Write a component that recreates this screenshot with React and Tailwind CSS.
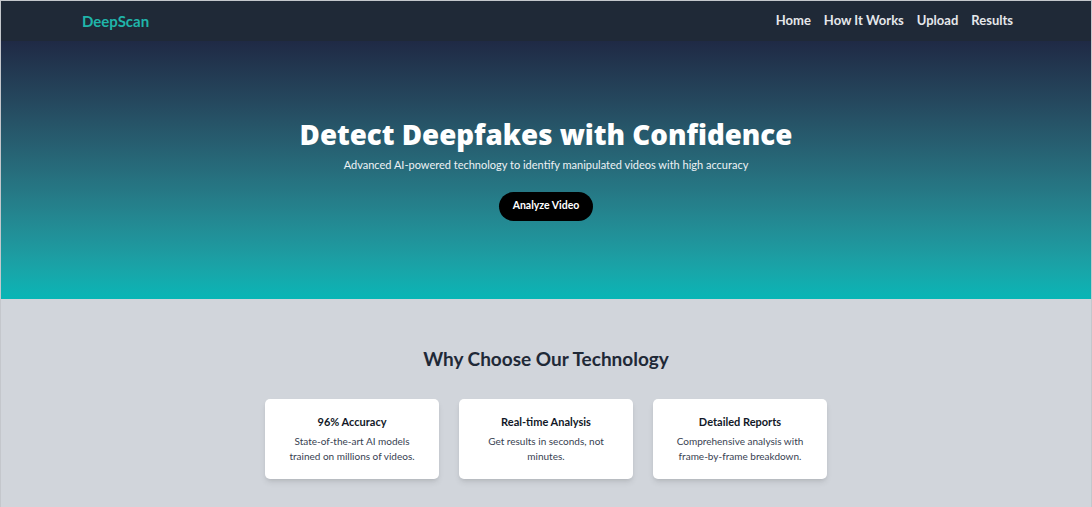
export default function App() {
  const features = [
    { title: "96% Accuracy", text: "State-of-the-art AI models trained on millions of videos." },
    { title: "Real-time Analysis", text: "Get results in seconds, not minutes." },
    { title: "Detailed Reports", text: "Comprehensive analysis with frame-by-frame breakdown." },
  ];

  return (
    <div className="min-h-screen bg-[#d1d5db] border border-[#c4c7cc] font-['Lato',sans-serif]">
      {/* Navbar */}
      <nav className="bg-[#1f2937] h-[40px] flex items-center justify-between pl-[81px] pr-[78px]">
        <span className="text-[#1fb5aa] font-bold text-[15px]">DeepScan</span>
        <div className="flex items-center gap-[13px] text-[13px] font-bold text-[#e5e7eb]">
          <a>Home</a>
          <a>How It Works</a>
          <a>Upload</a>
          <a>Results</a>
        </div>
      </nav>

      {/* Hero */}
      <section className="h-[258px] bg-gradient-to-b from-[#1f2a45] to-[#07b6b6] flex flex-col items-center pt-[75px] text-white">
        <h1 className="font-['Open_Sans',sans-serif] text-[27.7px] font-extrabold leading-[36px]">Detect Deepfakes with Confidence</h1>
        <p className="text-[11px] mt-[5px] text-[#eef2f5]">Advanced AI-powered technology to identify manipulated videos with high accuracy</p>
        <button className="mt-[18px] bg-black rounded-full h-[29px] w-[94px] text-[10.5px] font-bold">Analyze Video</button>
      </section>

      {/* Features */}
      <section className="flex flex-col items-center pt-[46px] pb-[28px]">
        <h2 className="text-[19px] font-bold text-[#1f2937]">Why Choose Our Technology</h2>
        <div className="grid grid-cols-3 gap-[20px] mt-[25px]">
          {features.map((f) => (
            <div key={f.title} className="bg-white rounded-[5px] shadow-md w-[174px] h-[80px] flex flex-col items-center pt-[15px] px-[14px] text-center">
              <h3 className="text-[11px] font-bold text-[#111827]">{f.title}</h3>
              <p className="text-[10px] leading-[15px] mt-[4px] text-[#374151]">{f.text}</p>
            </div>
          ))}
        </div>
      </section>
    </div>
  );
}
